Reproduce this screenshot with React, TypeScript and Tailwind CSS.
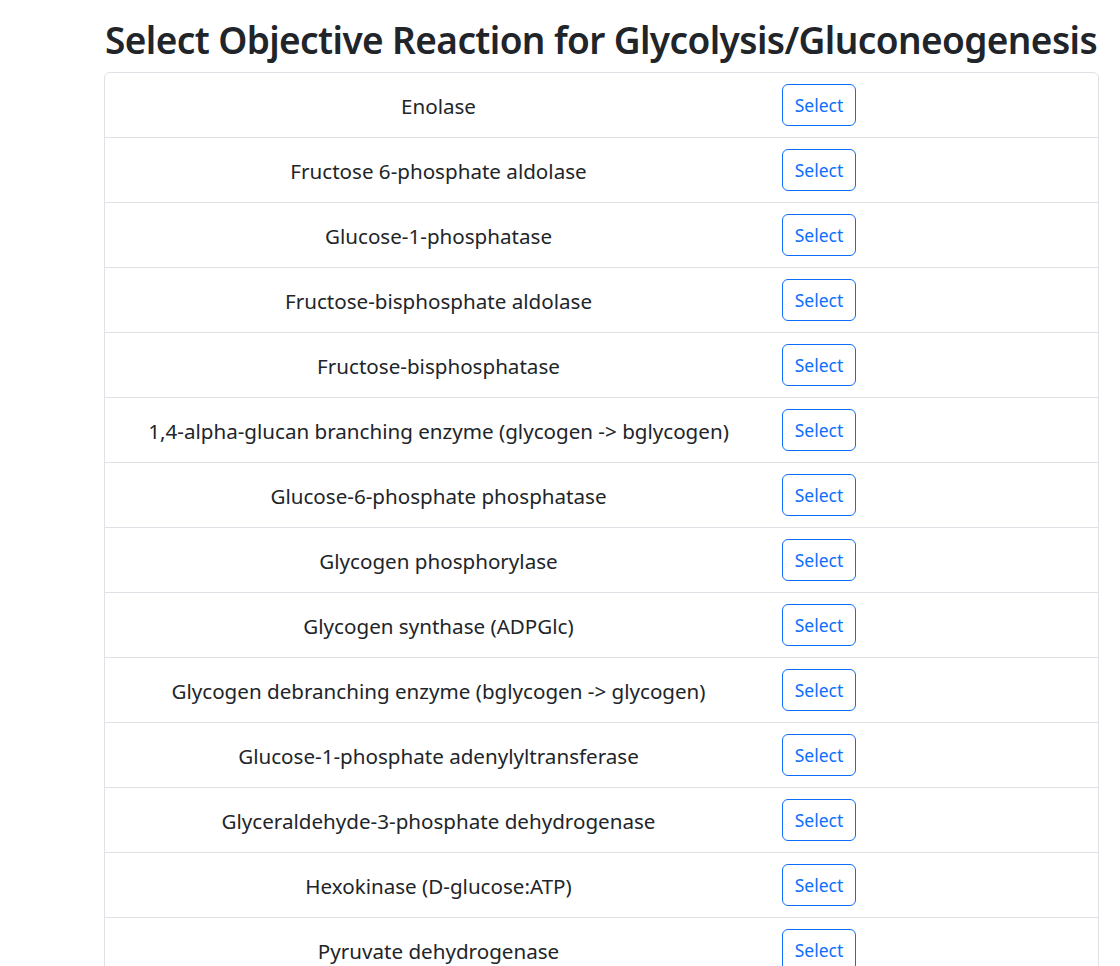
const reactions = [
  "Enolase",
  "Fructose 6-phosphate aldolase",
  "Glucose-1-phosphatase",
  "Fructose-bisphosphate aldolase",
  "Fructose-bisphosphatase",
  "1,4-alpha-glucan branching enzyme (glycogen -> bglycogen)",
  "Glucose-6-phosphate phosphatase",
  "Glycogen phosphorylase",
  "Glycogen synthase (ADPGlc)",
  "Glycogen debranching enzyme (bglycogen -> glycogen)",
  "Glucose-1-phosphate adenylyltransferase",
  "Glyceraldehyde-3-phosphate dehydrogenase",
  "Hexokinase (D-glucose:ATP)",
  "Pyruvate dehydrogenase",
  "Phosphofructokinase",
  "Phosphoglycerate kinase",
  "Phosphoglycerate mutase",
  "Pyruvate kinase",
  "Triose-phosphate isomerase",
];

export default function App() {
  return (
    <div className="min-h-screen bg-white text-[#212529]" style={{ fontFamily: '"Noto Sans", "Open Sans", sans-serif' }}>
      <div className="ml-[104px] w-[995px] pt-[17px]">
        <h1 className="text-[37px] leading-[1.26] font-semibold mb-2 pl-px tracking-[-0.6px] whitespace-nowrap">
          Select Objective Reaction for Glycolysis/Gluconeogenesis
        </h1>
        <div className="border border-[#dee2e6] rounded-md bg-white">
          {reactions.map((r, i) => (
            <div key={i} className={`flex items-center ${i > 0 ? "h-[65px] border-t border-[#dee2e6]" : "h-[64px]"}`}>
              <div className="w-[667px] text-center text-[20.6px] pt-[3px]">{r}</div>
              <button className="ml-[10px] h-[42px] w-[74px] border border-[#0d6efd] rounded-md text-[#0d6efd] text-[17.5px] bg-white pt-[2px]">
                Select
              </button>
            </div>
          ))}
        </div>
      </div>
    </div>
  );
}
